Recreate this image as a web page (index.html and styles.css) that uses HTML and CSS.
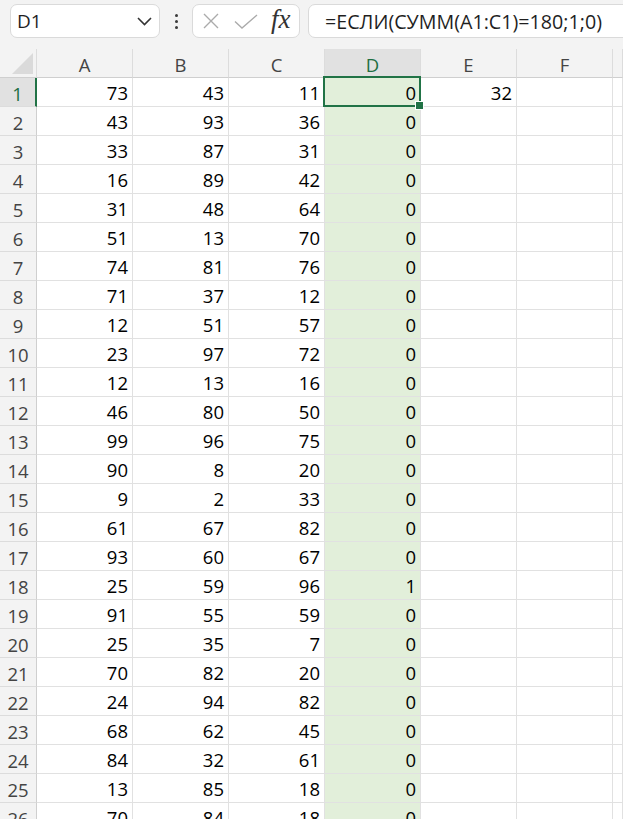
FILE: index.html
```html
<!DOCTYPE html>
<html lang="ru">
<head>
<meta charset="utf-8">
<title>Excel</title>
<link rel="stylesheet" href="styles.css">
</head>
<body>
<div class="toolbar">
  <div class="namebox"><span>D1</span>
    <svg width="15" height="9" viewBox="0 0 15 9"><path d="M1 1l6.5 6.5L14 1" stroke="#333" stroke-width="1.6" fill="none"/></svg>
  </div>
  <div class="more"><i></i><i></i><i></i></div>
  <div class="fxbox">
    <svg class="ic-x" width="16" height="16" viewBox="0 0 16 16"><path d="M1 1L15 15M15 1L1 15" stroke="#ababab" stroke-width="1.4" fill="none"/></svg>
    <svg class="ic-ok" width="24" height="15" viewBox="0 0 24 15"><path d="M1 7.5L8 14L23 1" stroke="#ababab" stroke-width="1.4" fill="none"/></svg>
    <span class="fx">fx</span>
  </div>
  <div class="formula">=ЕСЛИ(СУММ(A1:C1)=180;1;0)</div>
</div>
<div class="sheet">
  <div class="c corner"><span class="tri"></span></div>
  <div class="c h">A</div><div class="c h">B</div><div class="c h">C</div><div class="c h hact">D</div><div class="c h">E</div><div class="c h">F</div><div class="c h"></div>

  <div class="c r ract">1</div><div class="c">73</div><div class="c">43</div><div class="c">11</div><div class="c d act">0</div><div class="c">32</div><div class="c"></div><div class="c"></div>
  <div class="c r">2</div><div class="c">43</div><div class="c">93</div><div class="c">36</div><div class="c d">0</div><div class="c"></div><div class="c"></div><div class="c"></div>
  <div class="c r">3</div><div class="c">33</div><div class="c">87</div><div class="c">31</div><div class="c d">0</div><div class="c"></div><div class="c"></div><div class="c"></div>
  <div class="c r">4</div><div class="c">16</div><div class="c">89</div><div class="c">42</div><div class="c d">0</div><div class="c"></div><div class="c"></div><div class="c"></div>
  <div class="c r">5</div><div class="c">31</div><div class="c">48</div><div class="c">64</div><div class="c d">0</div><div class="c"></div><div class="c"></div><div class="c"></div>
  <div class="c r">6</div><div class="c">51</div><div class="c">13</div><div class="c">70</div><div class="c d">0</div><div class="c"></div><div class="c"></div><div class="c"></div>
  <div class="c r">7</div><div class="c">74</div><div class="c">81</div><div class="c">76</div><div class="c d">0</div><div class="c"></div><div class="c"></div><div class="c"></div>
  <div class="c r">8</div><div class="c">71</div><div class="c">37</div><div class="c">12</div><div class="c d">0</div><div class="c"></div><div class="c"></div><div class="c"></div>
  <div class="c r">9</div><div class="c">12</div><div class="c">51</div><div class="c">57</div><div class="c d">0</div><div class="c"></div><div class="c"></div><div class="c"></div>
  <div class="c r">10</div><div class="c">23</div><div class="c">97</div><div class="c">72</div><div class="c d">0</div><div class="c"></div><div class="c"></div><div class="c"></div>
  <div class="c r">11</div><div class="c">12</div><div class="c">13</div><div class="c">16</div><div class="c d">0</div><div class="c"></div><div class="c"></div><div class="c"></div>
  <div class="c r">12</div><div class="c">46</div><div class="c">80</div><div class="c">50</div><div class="c d">0</div><div class="c"></div><div class="c"></div><div class="c"></div>
  <div class="c r">13</div><div class="c">99</div><div class="c">96</div><div class="c">75</div><div class="c d">0</div><div class="c"></div><div class="c"></div><div class="c"></div>
  <div class="c r">14</div><div class="c">90</div><div class="c">8</div><div class="c">20</div><div class="c d">0</div><div class="c"></div><div class="c"></div><div class="c"></div>
  <div class="c r">15</div><div class="c">9</div><div class="c">2</div><div class="c">33</div><div class="c d">0</div><div class="c"></div><div class="c"></div><div class="c"></div>
  <div class="c r">16</div><div class="c">61</div><div class="c">67</div><div class="c">82</div><div class="c d">0</div><div class="c"></div><div class="c"></div><div class="c"></div>
  <div class="c r">17</div><div class="c">93</div><div class="c">60</div><div class="c">67</div><div class="c d">0</div><div class="c"></div><div class="c"></div><div class="c"></div>
  <div class="c r">18</div><div class="c">25</div><div class="c">59</div><div class="c">96</div><div class="c d">1</div><div class="c"></div><div class="c"></div><div class="c"></div>
  <div class="c r">19</div><div class="c">91</div><div class="c">55</div><div class="c">59</div><div class="c d">0</div><div class="c"></div><div class="c"></div><div class="c"></div>
  <div class="c r">20</div><div class="c">25</div><div class="c">35</div><div class="c">7</div><div class="c d">0</div><div class="c"></div><div class="c"></div><div class="c"></div>
  <div class="c r">21</div><div class="c">70</div><div class="c">82</div><div class="c">20</div><div class="c d">0</div><div class="c"></div><div class="c"></div><div class="c"></div>
  <div class="c r">22</div><div class="c">24</div><div class="c">94</div><div class="c">82</div><div class="c d">0</div><div class="c"></div><div class="c"></div><div class="c"></div>
  <div class="c r">23</div><div class="c">68</div><div class="c">62</div><div class="c">45</div><div class="c d">0</div><div class="c"></div><div class="c"></div><div class="c"></div>
  <div class="c r">24</div><div class="c">84</div><div class="c">32</div><div class="c">61</div><div class="c d">0</div><div class="c"></div><div class="c"></div><div class="c"></div>
  <div class="c r">25</div><div class="c">13</div><div class="c">85</div><div class="c">18</div><div class="c d">0</div><div class="c"></div><div class="c"></div><div class="c"></div>
  <div class="c r">26</div><div class="c">70</div><div class="c">84</div><div class="c">18</div><div class="c d">0</div><div class="c"></div><div class="c"></div><div class="c"></div>
</div>
</body>
</html>
```

FILE: styles.css
```css
* { box-sizing: border-box; }
html, body {
  margin: 0;
  height: 100%;
  overflow: hidden;
  background: #fff;
  font-family: "Open Sans", "Noto Sans", sans-serif;
}
.toolbar {
  display: flex;
  align-items: flex-start;
  height: 49px;
  background: #f3f3f3;
  padding: 4px 0 0 10px;
}
.namebox {
  width: 150px;
  height: 34px;
  background: #fff;
  border: 1px solid #dadada;
  border-radius: 7px;
  display: flex;
  align-items: center;
  justify-content: space-between;
  padding: 0 7px 0 6px;
  font-size: 19px;
  color: #1f1f1f;
}
.more {
  width: 32px;
  height: 34px;
  display: flex;
  flex-direction: column;
  align-items: center;
  justify-content: center;
  gap: 3px;
}
.more i {
  display: block;
  width: 3px;
  height: 3px;
  background: #3a3a3a;
  border-radius: 50%;
}
.fxbox {
  width: 108px;
  height: 34px;
  background: #fff;
  border: 1px solid #dadada;
  border-radius: 7px;
  display: flex;
  align-items: center;
  padding-left: 10px;
}
.ic-x { margin-right: 15px; }
.ic-ok { margin-right: 13px; }
.fx {
  font-family: "Liberation Serif", serif;
  font-style: italic;
  font-size: 27px;
  color: #333;
  line-height: 1;
  margin-top: -3px;
}
.formula {
  flex: 1;
  margin-left: 8px;
  margin-right: -14px;
  height: 34px;
  background: #fff;
  border: 1px solid #dadada;
  border-radius: 7px;
  padding-left: 16px;
  font-size: 19.7px;
  color: #1f1f1f;
  display: flex;
  align-items: center;
  white-space: nowrap;
  overflow: hidden;
}
.sheet {
  display: grid;
  grid-template-columns: 37px repeat(6, 96px) 1fr;
  grid-auto-rows: 29px;
}
.c {
  border-right: 1px solid #e1e1e1;
  border-bottom: 1px solid #e1e1e1;
  font-size: 18.5px;
  line-height: 28px;
  padding: 1px 4px 0 0;
  text-align: right;
  color: #000;
  white-space: nowrap;
}
.h {
  background: #f3f3f3;
  text-align: center;
  color: #444;
  padding: 2px 0 0;
  border-right-color: #dcdcdc;
  border-bottom-color: #cfcfcf;
}
.r {
  background: #f3f3f3;
  text-align: center;
  color: #444;
  padding: 2px 0 0;
  border-right-color: #cfcfcf;
  border-bottom-color: #dcdcdc;
}
.corner {
  background: #f3f3f3;
  border-right-color: #dcdcdc;
  border-bottom-color: #cfcfcf;
  display: flex;
  align-items: flex-end;
  justify-content: flex-end;
  padding: 0 3px 3px 0;
}
.tri {
  width: 21px;
  height: 21px;
  background: #dadada;
  clip-path: polygon(100% 0, 100% 100%, 0 100%);
}
.hact {
  background: #e1e1e1;
  color: #1e6e42;
  border-bottom: 2px solid #217346;
}
.ract {
  background: #e1e1e1;
  color: #1e6e42;
  border-right: 2px solid #217346;
}
.d { background: #e2efda; }
.act { position: relative; }
.act::after {
  content: "";
  position: absolute;
  left: -2px;
  top: -2px;
  right: -1px;
  bottom: -1px;
  border: 2px solid #217346;
}
.act::before {
  content: "";
  position: absolute;
  right: -3px;
  bottom: -3px;
  width: 7px;
  height: 7px;
  background: #217346;
  box-shadow: 0 0 0 1px #fff;
  z-index: 2;
}
```
